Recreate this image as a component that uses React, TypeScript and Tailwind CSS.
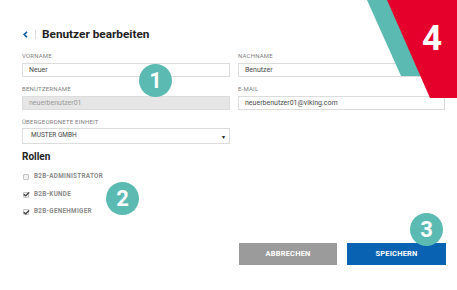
import { Check } from "lucide-react"

function Field({ label, value, disabled }: { label: string; value: string; disabled?: boolean }) {
  return (
    <div className="flex flex-col">
      <div className="h-[8px] text-[6px] leading-[8px] tracking-[0.2px] text-[#808080] uppercase">{label}</div>
      <div
        className={`mt-[3px] h-[14px] border border-[#dcdcdc] pl-[6px] flex items-center text-[7px] ${
          disabled ? "bg-[#e6e6e6] text-[#9a9a9a]" : "bg-white text-[#4a4a4a]"
        }`}
      >
        {value}
      </div>
    </div>
  )
}

function Role({ label, checked }: { label: string; checked?: boolean }) {
  return (
    <div className="flex items-center h-[8px]">
      <div className="relative w-[6px] h-[6px] border border-[#c4c4c4] bg-[#f2f2f2] rounded-[1px] flex items-center justify-center">
        {checked && <Check className="absolute w-[7px] h-[7px] text-[#333]" strokeWidth={4} />}
      </div>
      <span className="ml-[5px] text-[6.3px] font-bold tracking-[0.3px] text-[#8a8a8a] uppercase">{label}</span>
    </div>
  )
}

function Badge({ n, className }: { n: string; className: string }) {
  return (
    <div
      className={`absolute w-[33px] h-[33px] rounded-full bg-[#5bbab2] text-white font-bold text-[22px] leading-none flex items-center justify-center ${className}`}
    >
      {n}
    </div>
  )
}

export default function App() {
  return (
    <div className="relative w-[457px] h-[290px] overflow-hidden bg-white font-['Roboto',sans-serif]">
      {/* Header */}
      <div className="flex items-center pt-[27px] pl-[23px] h-[41px]">
        <svg width="5" height="7" viewBox="0 0 5 7" className="mt-[1px]">
          <path d="M4 0.8 L1.2 3.5 L4 6.2" stroke="#0a5ea8" strokeWidth="1.6" fill="none" />
        </svg>
        <div className="ml-[7px] w-px h-[9px] bg-[#ddd]" />
        <h1 className="ml-[6px] text-[11.8px] leading-[14px] font-bold text-[#222]">Benutzer bearbeiten</h1>
      </div>

      {/* Form */}
      <div className="grid grid-cols-[208px_207px] gap-x-[8px] gap-y-[8px] pl-[22px] mt-[11px]">
        <Field label="Vorname" value="Neuer" />
        <Field label="Nachname" value="Benutzer" />
        <Field label="Benutzername" value="neuerbenutzer01" disabled />
        <Field label="E-Mail" value="neuerbenutzer01@viking.com" />
        <div className="flex flex-col">
          <div className="h-[8px] text-[6px] leading-[8px] tracking-[0.2px] text-[#808080] uppercase">Übergeordnete Einheit</div>
          <div className="mt-[2px] h-[16px] border border-[#dcdcdc] bg-white pl-[8px] pr-[4px] flex items-center justify-between text-[6.5px] text-[#444]">
            <span>MUSTER GMBH</span>
            <span className="text-[6px] text-[#222]">▾</span>
          </div>
        </div>
      </div>

      {/* Roles */}
      <div className="pl-[22px] mt-[7px]">
        <div className="text-[10px] leading-[12px] font-bold text-[#222]">Rollen</div>
        <div className="flex flex-col gap-[9.5px] mt-[10px] pl-[1px]">
          <Role label="B2B-Administrator" />
          <Role label="B2B-Kunde" checked />
          <Role label="B2B-Genehmiger" checked />
        </div>
      </div>

      {/* Buttons */}
      <div className="absolute left-[239px] top-[243px] flex gap-[10px]">
        <button className="w-[98px] h-[22px] bg-[#9b9b9b] text-white text-[7.5px] font-bold tracking-[0.2px]">ABBRECHEN</button>
        <button className="w-[99px] h-[22px] bg-[#0a62b3] text-white text-[7.5px] font-bold tracking-[0.2px]">SPEICHERN</button>
      </div>

      {/* Corner decoration */}
      <svg className="absolute left-0 top-0" width="457" height="290" viewBox="0 0 457 290">
        <polygon points="367,0 457,0 457,76 401,76" fill="#5bbab2" />
        <polygon points="387,0 457,0 457,98 430,98" fill="#e4002b" />
      </svg>
      <div className="absolute left-[422px] top-[21px] text-[35px] leading-[36px] font-bold text-white">4</div>

      <Badge n="1" className="left-[139px] top-[64px]" />
      <Badge n="2" className="left-[106px] top-[182px]" />
      <Badge n="3" className="left-[410px] top-[213px]" />
    </div>
  )
}
